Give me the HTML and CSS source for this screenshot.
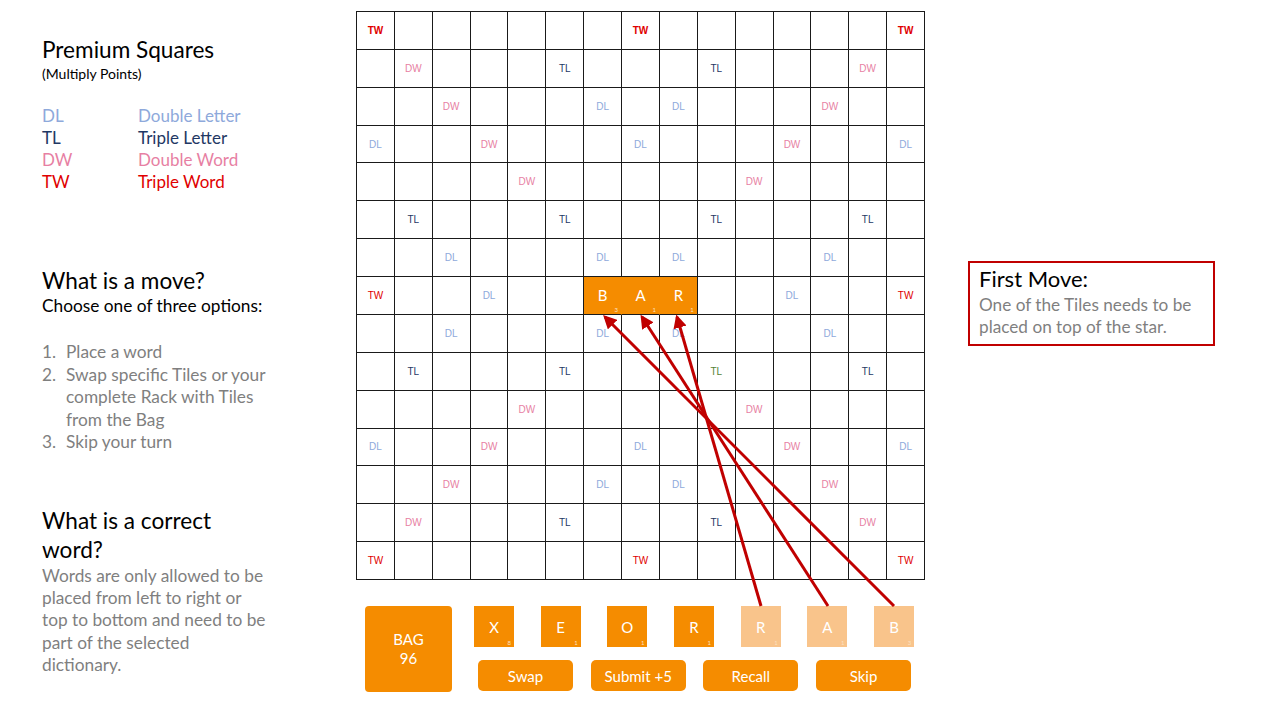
FILE: index.html
```html
<!DOCTYPE html>
<html>
<head>
<meta charset="utf-8">
<link rel="stylesheet" href="styles.css">
</head>
<body>
<div class="page">
  <section class="info">
    <h1 class="title">Premium Squares</h1>
    <p class="sub">(Multiply Points)</p>
    <div class="legend">
      <span class="k-dl">DL</span><span class="k-dl">Double Letter</span>
      <span class="k-tl">TL</span><span class="k-tl">Triple Letter</span>
      <span class="k-dw">DW</span><span class="k-dw">Double Word</span>
      <span class="k-tw">TW</span><span class="k-tw">Triple Word</span>
    </div>

    <h2 class="title move">What is a move?</h2>
    <p class="lead">Choose one of three options:</p>
    <ol class="steps">
      <li><span class="num">1.</span><span>Place a word</span></li>
      <li><span class="num">2.</span><span>Swap specific Tiles or your<br>complete Rack with Tiles<br>from the Bag</span></li>
      <li><span class="num">3.</span><span>Skip your turn</span></li>
    </ol>

    <h2 class="title correct">What is a correct<br>word?</h2>
    <p class="body">Words are only allowed to be<br>placed from left to right or<br>top to bottom and need to be<br>part of the selected<br>dictionary.</p>
  </section>

  <section class="game">
    <div class="board">
      <!-- row 0 -->
      <span class="tw b">TW</span><span></span><span></span><span></span><span></span><span></span><span></span><span class="tw b">TW</span><span></span><span></span><span></span><span></span><span></span><span></span><span class="tw b">TW</span>
      <!-- row 1 -->
      <span></span><span class="dw">DW</span><span></span><span></span><span></span><span class="tl">TL</span><span></span><span></span><span></span><span class="tl">TL</span><span></span><span></span><span></span><span class="dw">DW</span><span></span>
      <!-- row 2 -->
      <span></span><span></span><span class="dw">DW</span><span></span><span></span><span></span><span class="dl">DL</span><span></span><span class="dl">DL</span><span></span><span></span><span></span><span class="dw">DW</span><span></span><span></span>
      <!-- row 3 -->
      <span class="dl">DL</span><span></span><span></span><span class="dw">DW</span><span></span><span></span><span></span><span class="dl">DL</span><span></span><span></span><span></span><span class="dw">DW</span><span></span><span></span><span class="dl">DL</span>
      <!-- row 4 -->
      <span></span><span></span><span></span><span></span><span class="dw">DW</span><span></span><span></span><span></span><span></span><span></span><span class="dw">DW</span><span></span><span></span><span></span><span></span>
      <!-- row 5 -->
      <span></span><span class="tl">TL</span><span></span><span></span><span></span><span class="tl">TL</span><span></span><span></span><span></span><span class="tl">TL</span><span></span><span></span><span></span><span class="tl">TL</span><span></span>
      <!-- row 6 -->
      <span></span><span></span><span class="dl">DL</span><span></span><span></span><span></span><span class="dl">DL</span><span></span><span class="dl">DL</span><span></span><span></span><span></span><span class="dl">DL</span><span></span><span></span>
      <!-- row 7 -->
      <span class="tw">TW</span><span></span><span></span><span class="dl">DL</span><span></span><span></span><span class="tile join">B<small>3</small></span><span class="tile join">A<small>1</small></span><span class="tile">R<small>1</small></span><span></span><span></span><span class="dl">DL</span><span></span><span></span><span class="tw">TW</span>
      <!-- row 8 -->
      <span></span><span></span><span class="dl">DL</span><span></span><span></span><span></span><span class="dl">DL</span><span></span><span class="dl">DL</span><span></span><span></span><span></span><span class="dl">DL</span><span></span><span></span>
      <!-- row 9 -->
      <span></span><span class="tl">TL</span><span></span><span></span><span></span><span class="tl">TL</span><span></span><span></span><span></span><span class="tl green">TL</span><span></span><span></span><span></span><span class="tl">TL</span><span></span>
      <!-- row 10 -->
      <span></span><span></span><span></span><span></span><span class="dw">DW</span><span></span><span></span><span></span><span></span><span></span><span class="dw">DW</span><span></span><span></span><span></span><span></span>
      <!-- row 11 -->
      <span class="dl">DL</span><span></span><span></span><span class="dw">DW</span><span></span><span></span><span></span><span class="dl">DL</span><span></span><span></span><span></span><span class="dw">DW</span><span></span><span></span><span class="dl">DL</span>
      <!-- row 12 -->
      <span></span><span></span><span class="dw">DW</span><span></span><span></span><span></span><span class="dl">DL</span><span></span><span class="dl">DL</span><span></span><span></span><span></span><span class="dw">DW</span><span></span><span></span>
      <!-- row 13 -->
      <span></span><span class="dw">DW</span><span></span><span></span><span></span><span class="tl">TL</span><span></span><span></span><span></span><span class="tl">TL</span><span></span><span></span><span></span><span class="dw">DW</span><span></span>
      <!-- row 14 -->
      <span class="tw">TW</span><span></span><span></span><span></span><span></span><span></span><span></span><span class="tw">TW</span><span></span><span></span><span></span><span></span><span></span><span></span><span class="tw">TW</span>
    </div>

    <div class="rack">
      <div class="bag"><span>BAG</span><span>96</span></div>
      <div class="controls">
        <div class="tiles">
          <div class="rtile">X<small>8</small></div>
          <div class="rtile">E<small>1</small></div>
          <div class="rtile">O<small>1</small></div>
          <div class="rtile">R<small>1</small></div>
          <div class="rtile used">R<small>1</small></div>
          <div class="rtile used">A<small>1</small></div>
          <div class="rtile used">B<small>3</small></div>
        </div>
        <div class="buttons">
          <button class="btn swap">Swap</button>
          <button class="btn">Submit +5</button>
          <button class="btn">Recall</button>
          <button class="btn">Skip</button>
        </div>
      </div>
    </div>
  </section>

  <aside class="side">
    <div class="callout">
      <h3 class="callout-title">First Move:</h3>
      <p class="callout-text">One of the Tiles needs to be placed on top of the star.</p>
    </div>
  </aside>
</div>

<svg class="arrows" width="1280" height="720" viewBox="0 0 1280 720">
  <defs>
    <marker id="head" viewBox="0 0 10 10" refX="8" refY="5" markerWidth="4.5" markerHeight="4.5" orient="auto">
      <path d="M0 0 L10 5 L0 10 Z" fill="#C00000"/>
    </marker>
  </defs>
  <line x1="894" y1="606" x2="605" y2="317" stroke="#C00000" stroke-width="3" marker-end="url(#head)"/>
  <line x1="828" y1="606" x2="642" y2="317" stroke="#C00000" stroke-width="3" marker-end="url(#head)"/>
  <line x1="761" y1="606" x2="677" y2="317" stroke="#C00000" stroke-width="3" marker-end="url(#head)"/>
</svg>
</body>
</html>
```

FILE: styles.css
```css
* { box-sizing: border-box; margin: 0; padding: 0; }

body {
  width: 1280px;
  height: 720px;
  background: #ffffff;
  font-family: Lato, "Open Sans", sans-serif;
  color: #000;
  position: relative;
  overflow: hidden;
}

.page {
  display: flex;
  height: 720px;
}

/* ---------- left info column ---------- */
.info {
  width: 356px;
  flex: none;
  padding: 37px 0 0 42px;
}

.title {
  font-size: 22.6px;
  line-height: 26px;
  font-weight: 400;
}

.sub {
  margin-top: 3px;
  font-size: 14px;
  line-height: 16px;
}

.legend {
  margin-top: 23px;
  display: grid;
  grid-template-columns: 96px auto;
  font-size: 17px;
  line-height: 22px;
}

.k-dl { color: #8EA9DB; }
.k-tl { color: #1F3864; }
.k-dw { color: #E77FA3; }
.k-tw { color: #E00000; }

.move {
  margin-top: 73px;
  line-height: 29px;
}

.lead {
  font-size: 17.3px;
  line-height: 22px;
}

.steps {
  list-style: none;
  margin-top: 24px;
  color: #7F7F7F;
  font-size: 17.3px;
  line-height: 22.5px;
  white-space: nowrap;
}

.steps li {
  display: flex;
}

.steps .num {
  width: 24px;
  flex: none;
}

.correct {
  margin-top: 52px;
  line-height: 29px;
  white-space: nowrap;
}

.body {
  margin-top: 1px;
  color: #7F7F7F;
  font-size: 17.3px;
  line-height: 22.4px;
  white-space: nowrap;
}

/* ---------- board ---------- */
.game {
  flex: none;
  padding-top: 11px;
}

.board {
  width: 569px;
  height: 569px;
  display: grid;
  grid-template-columns: repeat(15, 1fr);
  grid-template-rows: repeat(15, 1fr);
  border-top: 1px solid #1a1a1a;
  border-left: 1px solid #1a1a1a;
}

.board span {
  position: relative;
  display: flex;
  align-items: center;
  justify-content: center;
  border-right: 1px solid #1a1a1a;
  border-bottom: 1px solid #1a1a1a;
  font-family: "Liberation Sans", Arial, sans-serif;
  font-size: 10px;
}

.board .dl { color: #8EA9DB; }
.board .tl { color: #1F3864; }
.board .dw { color: #E77FA3; }
.board .tw { color: #E00000; }
.board .b { font-weight: 700; }
.board .green { color: #548235; }

.board .tile {
  background: #F58C00;
  color: #fff;
  font-family: Lato, sans-serif;
  font-size: 15px;
}

.board .join {
  border-right-color: #F58C00;
}

.board .tile small,
.rtile small {
  position: absolute;
  right: 3px;
  bottom: 1px;
  font-size: 6px;
  line-height: 7px;
  color: #FBE0C0;
}

/* ---------- rack ---------- */
.rack {
  display: flex;
  margin-top: 26px;
  padding-left: 9px;
  gap: 22px;
}

.bag {
  width: 87px;
  height: 86px;
  background: #F58C00;
  border-radius: 4px;
  color: #fff;
  font-size: 15px;
  line-height: 19px;
  display: flex;
  flex-direction: column;
  align-items: center;
  justify-content: center;
}

.tiles {
  display: flex;
  gap: 26.7px;
}

.rtile {
  position: relative;
  width: 40px;
  height: 41px;
  background: #F58C00;
  color: #fff;
  font-size: 15px;
  display: flex;
  align-items: center;
  justify-content: center;
}

.rtile.used {
  background: #F9C48B;
}

.buttons {
  display: flex;
  gap: 17.7px;
  margin-top: 13px;
  padding-left: 4px;
}

.btn {
  width: 95px;
  height: 31px;
  border: none;
  border-radius: 5px;
  background: #F58C00;
  color: #fff;
  font-family: Lato, sans-serif;
  font-size: 15px;
}

/* ---------- right callout ---------- */
.side {
  flex: none;
  padding: 261px 0 0 43px;
}

.callout {
  width: 247px;
  height: 85px;
  border: 2px solid #C00000;
  padding: 4px 9px 0;
}

.callout-title {
  font-size: 22px;
  line-height: 24px;
  font-weight: 400;
}

.callout-text {
  color: #7F7F7F;
  font-size: 17.2px;
  line-height: 22px;
  margin-top: 3px;
}

/* ---------- overlay arrows ---------- */
.arrows {
  position: absolute;
  left: 0;
  top: 0;
  pointer-events: none;
}
```
